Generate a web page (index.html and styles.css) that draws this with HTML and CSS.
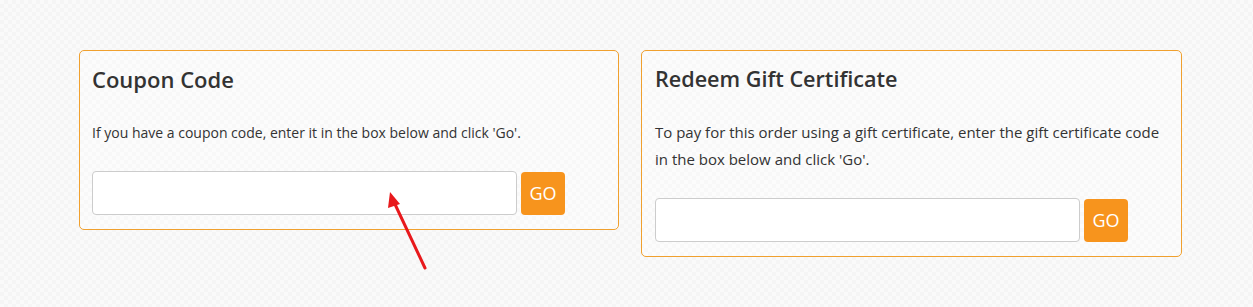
FILE: index.html
```html
<!DOCTYPE html>
<html>
<head>
<meta charset="utf-8">
<link rel="stylesheet" href="styles.css">
</head>
<body>
<div class="page">
  <div class="panels">
    <section class="panel panel-left">
      <h2 class="panel-title">Coupon Code</h2>
      <p class="panel-text">If you have a coupon code, enter it in the box below and click 'Go'.</p>
      <div class="form-row">
        <input class="code-input" type="text">
        <button class="go-btn">GO</button>
      </div>
    </section>
    <section class="panel panel-right">
      <h2 class="panel-title">Redeem Gift Certificate</h2>
      <p class="panel-text">To pay for this order using a gift certificate, enter the gift certificate code in the box below and click 'Go'.</p>
      <div class="form-row">
        <input class="code-input" type="text">
        <button class="go-btn">GO</button>
      </div>
    </section>
  </div>
  <svg class="annot-arrow" width="60" height="100" viewBox="0 0 60 100">
    <line x1="45" y1="88" x2="13" y2="20" stroke="#e8191c" stroke-width="3" stroke-linecap="round"/>
    <polygon points="10,12 20,24 8,28" fill="#e8191c"/>
  </svg>
</div>
</body>
</html>
```
FILE: styles.css
```css
html, body {
  margin: 0;
  padding: 0;
}
body {
  background-color: #fafafa;
  background-image:
    linear-gradient(45deg, #f5f5f5 25%, transparent 25%, transparent 75%, #f5f5f5 75%),
    linear-gradient(45deg, #f5f5f5 25%, transparent 25%, transparent 75%, #f5f5f5 75%);
  background-size: 8px 8px;
  background-position: 0 0, 4px 4px;
  font-family: "Open Sans", "Liberation Sans", sans-serif;
  color: #333;
  width: 1253px;
  height: 307px;
  overflow: hidden;
}
.page {
  position: relative;
  padding: 50px 0 0 79px;
}
.panels {
  display: flex;
  align-items: flex-start;
  gap: 22px;
}
.panel {
  box-sizing: border-box;
  border: 1px solid #f0a02e;
  border-radius: 5px;
  padding: 12px 14px 14px 12px;
  background: rgba(255,255,255,0.35);
}
.panel-left { width: 540px; }
.panel-right {
  width: 541px;
  padding-left: 13px;
}
.panel-title {
  margin: 0;
  font-size: 22px;
  font-weight: 600;
  line-height: 32px;
  color: #333;
}
.panel-right .panel-title {
  font-size: 21.6px;
}
.panel-text {
  margin: 24px 0 25px;
  font-size: 14px;
  line-height: 27px;
  color: #333;
}
.panel-right .panel-text {
  font-size: 15px;
}
.form-row {
  display: flex;
  align-items: center;
  gap: 4px;
}
.code-input {
  box-sizing: border-box;
  flex: none;
  width: 425px;
  height: 44px;
  border: 1px solid #ccc;
  border-radius: 4px;
  background: #fff;
  margin: 0;
}
.go-btn {
  box-sizing: border-box;
  flex: none;
  width: 44px;
  height: 43px;
  border: none;
  border-radius: 4px;
  background: #f7941d;
  color: #fff;
  font-family: "Open Sans", "Liberation Sans", sans-serif;
  font-size: 18px;
  padding: 0;
  margin: 0;
}
.annot-arrow {
  position: absolute;
  left: 380px;
  top: 180px;
}
```
